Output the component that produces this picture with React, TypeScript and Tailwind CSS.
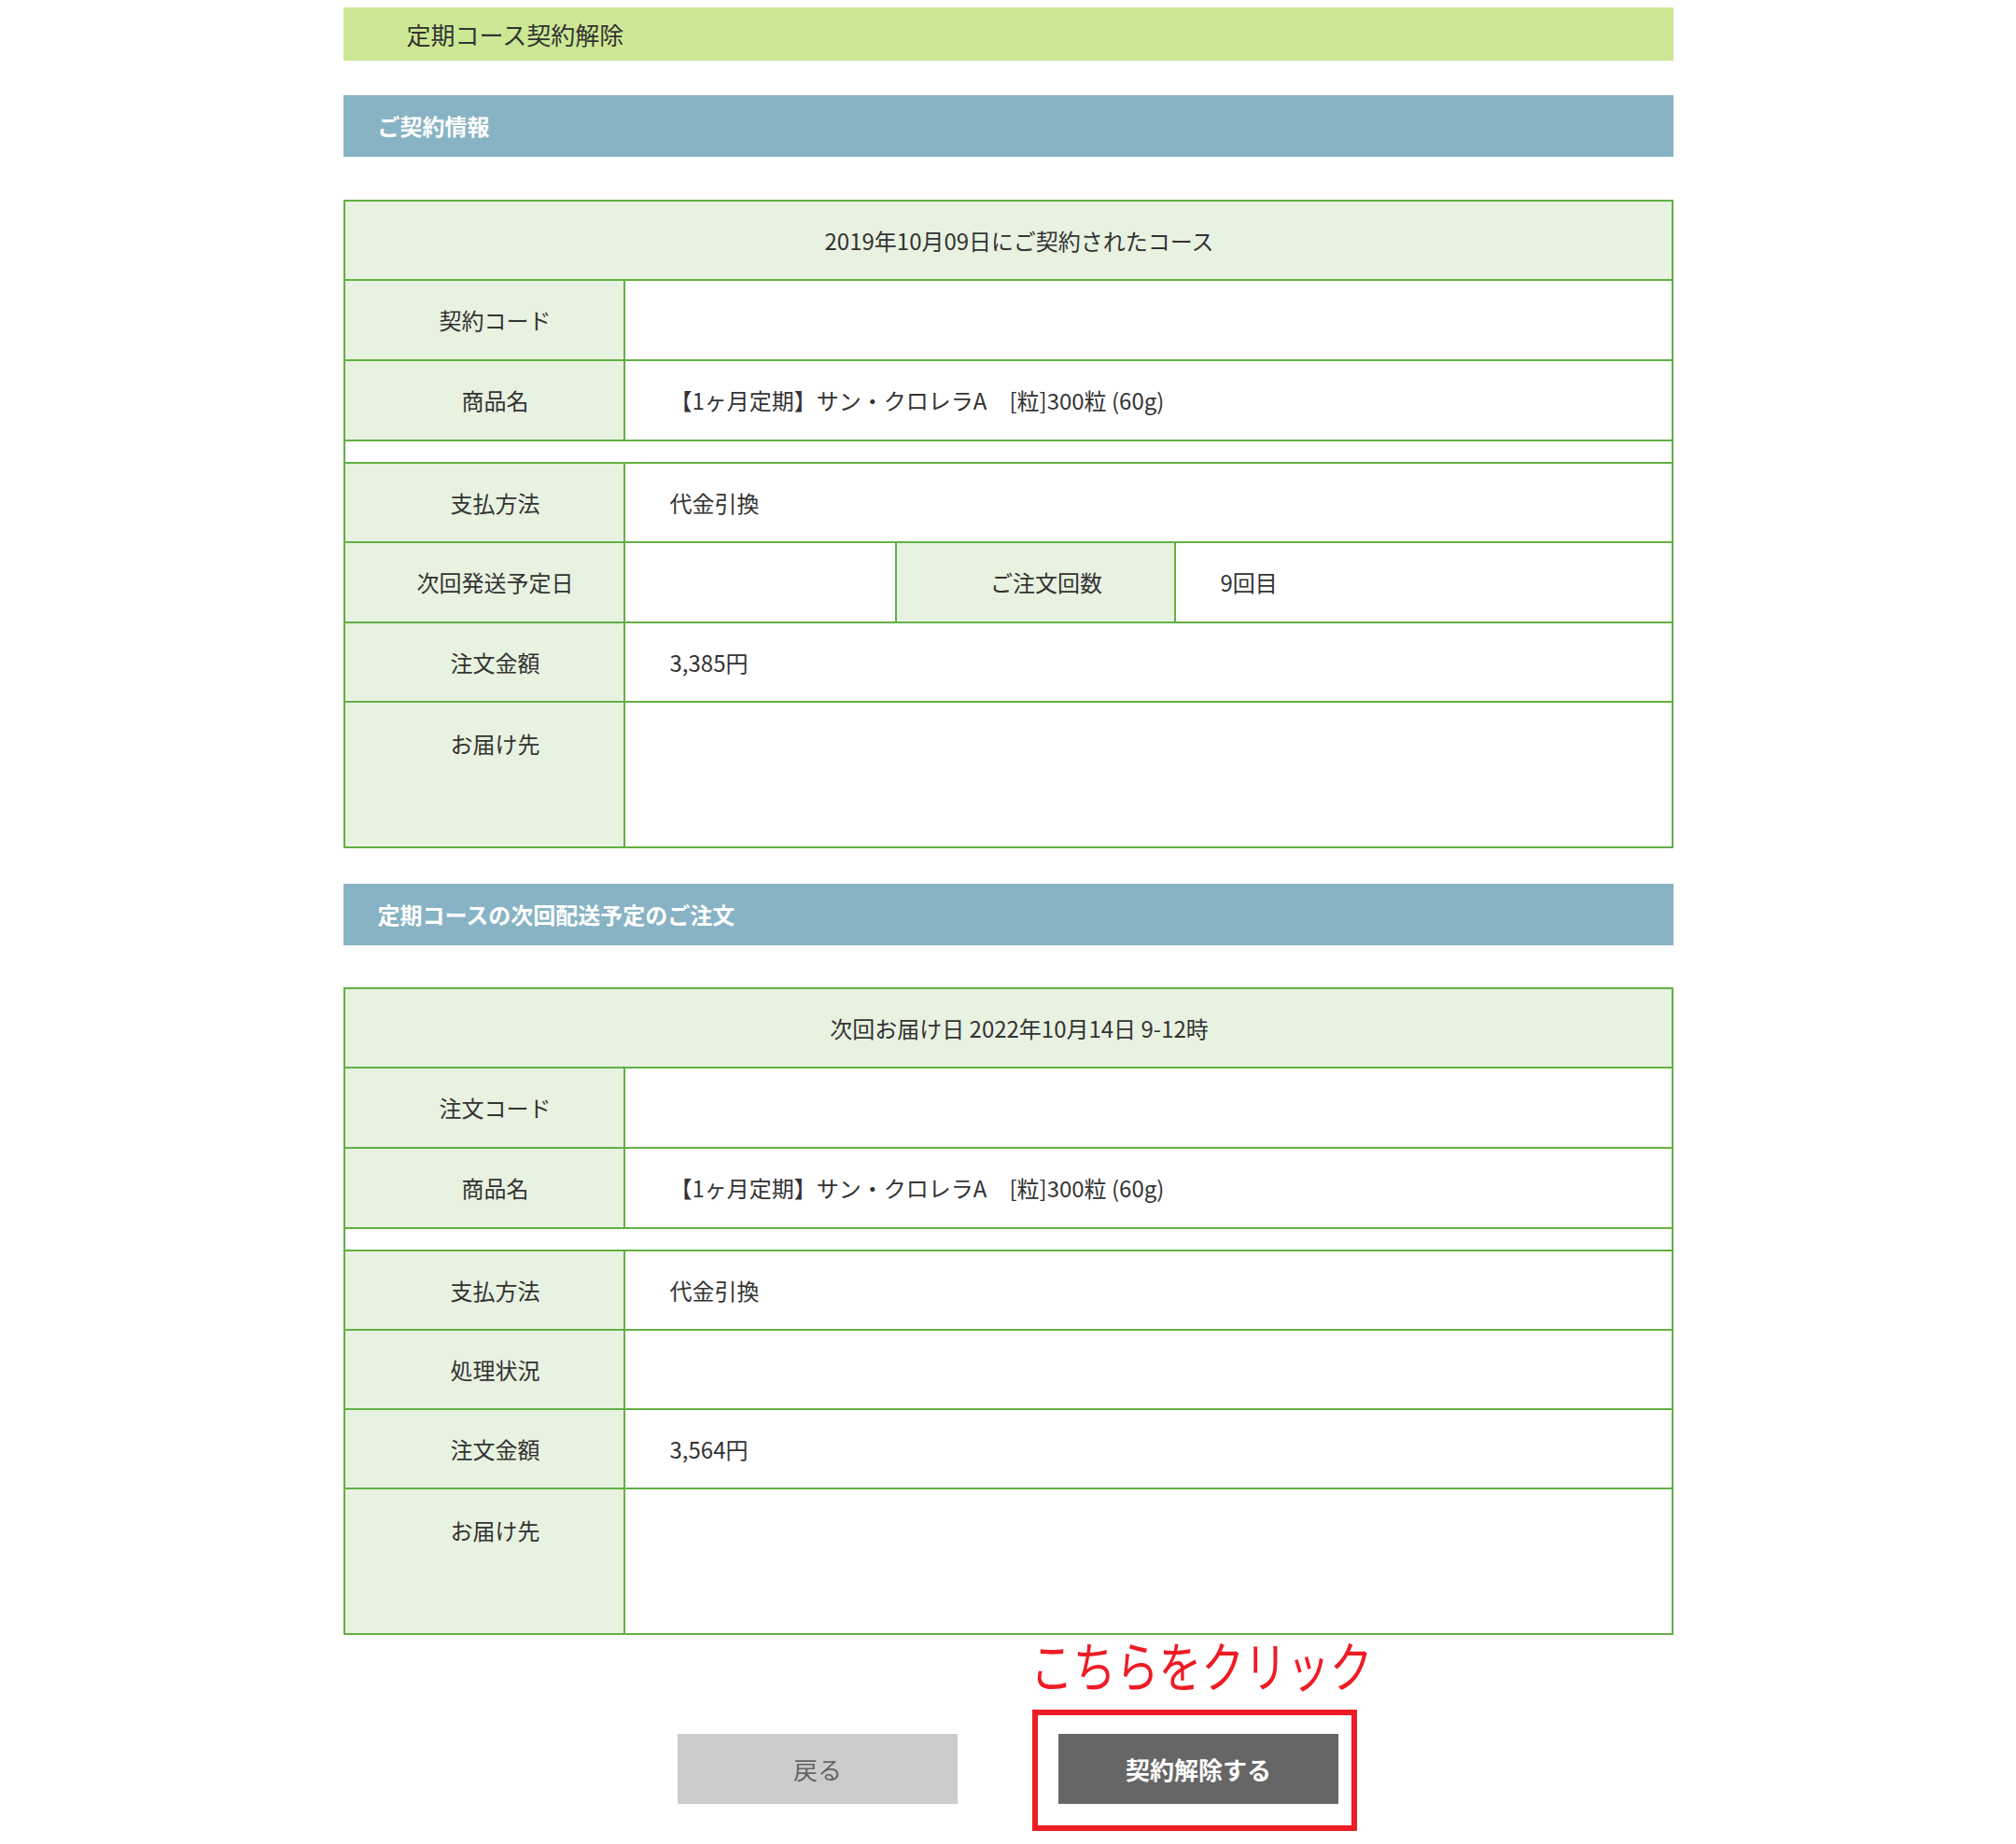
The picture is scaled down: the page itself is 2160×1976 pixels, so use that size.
import React from 'react';

const font = { fontFamily: '"Noto Sans CJK JP", "Noto Sans", sans-serif' };

const labelCls = 'border-2 border-[#62b044] bg-[#e8f2e1] pl-[24px] text-center text-[24px] text-[#333] font-normal';
const valueCls = 'border-2 border-[#62b044] bg-white pl-[48px] text-left text-[24px] text-[#333]';

const product = '【1ヶ月定期】サン・クロレラA　[粒]300粒 (60g)';

interface Row {
  label: string;
  value?: string;
  tall?: boolean;
}

const SectionBar: React.FC<{ title: string; className?: string }> = ({ title, className }) => (
  <div className={`flex h-[66px] items-center bg-[#88b3c4] pl-[37px] text-[24px] font-bold text-white ${className ?? ''}`}>
    {title}
  </div>
);

const InfoTable: React.FC<{
  caption: string;
  top: Row[];
  bottom: Row[];
  countRow?: boolean;
  className?: string;
}> = ({ caption, top, bottom, countRow, className }) => (
  <table className={`w-full table-fixed border-collapse border-2 border-[#62b044] ${className ?? ''}`}>
    <colgroup>
      <col className="w-[300px]" />
      <col className="w-[291px]" />
      <col className="w-[299px]" />
      <col />
    </colgroup>
    <tbody>
      <tr className="h-[85px]">
        <td colSpan={4} className={labelCls}>{caption}</td>
      </tr>
      {top.map((r) => (
        <tr key={r.label} className="h-[86px]">
          <th className={labelCls}>{r.label}</th>
          <td colSpan={3} className={valueCls}>{r.value}</td>
        </tr>
      ))}
      <tr className="h-[24px]">
        <td colSpan={4} className="border-2 border-[#62b044] bg-white" />
      </tr>
      {bottom.map((r, i) =>
        countRow && i === 1 ? (
          <tr key={r.label} className="h-[86px]">
            <th className={labelCls}>{r.label}</th>
            <td className={valueCls}></td>
            <th className={labelCls}>ご注文回数</th>
            <td className={valueCls}>9回目</td>
          </tr>
        ) : r.tall ? (
          <tr key={r.label} className="h-[156px]">
            <th className={`${labelCls} pt-[26px] align-top`}>{r.label}</th>
            <td colSpan={3} className={valueCls}></td>
          </tr>
        ) : (
          <tr key={r.label} className="h-[85px]">
            <th className={labelCls}>{r.label}</th>
            <td colSpan={3} className={valueCls}>{r.value}</td>
          </tr>
        )
      )}
    </tbody>
  </table>
);

export default function App() {
  return (
    <div className="min-h-[1976px] bg-white pt-[8px]" style={font}>
      <div className="mx-auto w-[1425px]">
        <div className="flex h-[57px] items-center bg-[#cde894] pl-[68px] text-[26px] text-[#333]">
          定期コース契約解除
        </div>

        <SectionBar title="ご契約情報" className="mt-[37px]" />
        <InfoTable
          className="mt-[46px]"
          caption="2019年10月09日にご契約されたコース"
          top={[
            { label: '契約コード', value: '' },
            { label: '商品名', value: product },
          ]}
          bottom={[
            { label: '支払方法', value: '代金引換' },
            { label: '次回発送予定日' },
            { label: '注文金額', value: '3,385円' },
            { label: 'お届け先', tall: true },
          ]}
          countRow
        />

        <SectionBar title="定期コースの次回配送予定のご注文" className="mt-[38px]" />
        <InfoTable
          className="mt-[45px]"
          caption="次回お届け日 2022年10月14日 9-12時"
          top={[
            { label: '注文コード', value: '' },
            { label: '商品名', value: product },
          ]}
          bottom={[
            { label: '支払方法', value: '代金引換' },
            { label: '処理状況', value: '' },
            { label: '注文金額', value: '3,564円' },
            { label: 'お届け先', tall: true },
          ]}
        />

        <div className="mt-[106px] flex justify-center gap-[108px]">
          <button className="flex h-[75px] w-[300px] items-center justify-center bg-[#cccccc] text-[26px] text-[#666]">
            戻る
          </button>
          <div className="relative">
            <button className="flex h-[75px] w-[300px] items-center justify-center bg-[#666666] text-[26px] font-bold text-white">
              契約解除する
            </button>
            <div className="pointer-events-none absolute -top-[26px] -right-[20px] -bottom-[29px] -left-[28px] border-[6px] border-[#ee1c25]" />
            <div className="pointer-events-none absolute -top-[104px] -left-[30px] origin-left scale-x-[0.79] whitespace-nowrap text-[58px] leading-none text-[#ee1c25]">
              こちらをクリック
            </div>
          </div>
        </div>
      </div>
    </div>
  );
}
